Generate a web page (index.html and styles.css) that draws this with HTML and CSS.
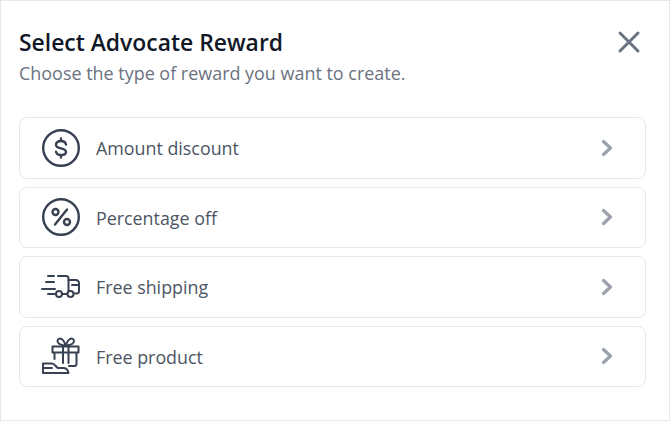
FILE: index.html
```html
<!DOCTYPE html>
<html lang="en">
<head>
<meta charset="utf-8">
<title>Select Advocate Reward</title>
<link rel="stylesheet" href="styles.css">
</head>
<body>
<div class="dialog">
  <header class="head">
    <div>
      <h1 class="title">Select Advocate Reward</h1>
      <p class="sub">Choose the type of reward you want to create.</p>
    </div>
    <svg class="close" viewBox="0 0 24 24" fill="none" stroke="currentColor" stroke-width="3" stroke-linecap="round"><path d="M3 3l18 18M21 3L3 21"/></svg>
  </header>
  <div class="list">
    <div class="row">
      <svg class="icon" viewBox="0 0 40 40" fill="none" stroke="currentColor" stroke-width="2.400" stroke-linecap="round" stroke-linejoin="round"><circle cx="20" cy="20" r="17.800"/><path d="M20 10.500v2.500M20 27v2.500M25 16.500c-.5-2.200-2.500-3.500-5-3.500-3 0-5 1.500-5 3.700 0 5 10 2.300 10 7.300 0 2-2 3-5 3-2.500 0-4.500-1.200-5-3.300"/></svg>
      <span class="label">Amount discount</span>
      <svg class="chev" viewBox="0 0 12 18" fill="none" stroke="currentColor" stroke-width="3.300" stroke-linecap="round" stroke-linejoin="round"><path d="M2.500 2.500L9.500 9l-7 6.500"/></svg>
    </div>
    <div class="row">
      <svg class="icon" viewBox="0 0 40 40" fill="none" stroke="currentColor" stroke-width="2.400" stroke-linecap="round" stroke-linejoin="round"><circle cx="20" cy="20" r="17.800"/><circle cx="14.500" cy="15" r="3"/><circle cx="26" cy="25" r="3"/><path d="M26 12.500L14 27.500"/></svg>
      <span class="label">Percentage off</span>
      <svg class="chev" viewBox="0 0 12 18" fill="none" stroke="currentColor" stroke-width="3.300" stroke-linecap="round" stroke-linejoin="round"><path d="M2.500 2.500L9.500 9l-7 6.500"/></svg>
    </div>
    <div class="row">
      <svg class="icon" viewBox="0 0 40 40" fill="none" stroke="currentColor" stroke-width="2" stroke-linecap="round" stroke-linejoin="round"><path d="M7 9h6M17 9h8c1.500 0 2.500 1 2.500 2.500V24M5 15h8M1 22h13M7 27h8M21 27h5"/><path d="M27.500 13h7c2 0 3.500 1.500 3.500 3.500V24c0 1.500-1 2.500-2.500 2.500H33M31 18h7"/><circle cx="18" cy="27" r="3"/><circle cx="29.500" cy="27" r="3"/></svg>
      <span class="label">Free shipping</span>
      <svg class="chev" viewBox="0 0 12 18" fill="none" stroke="currentColor" stroke-width="3.300" stroke-linecap="round" stroke-linejoin="round"><path d="M2.500 2.500L9.500 9l-7 6.500"/></svg>
    </div>
    <div class="row">
      <svg class="icon" viewBox="0 0 40 40" fill="none" stroke="currentColor" stroke-width="2" stroke-linecap="round" stroke-linejoin="round"><path d="M11.500 10.500h26v6h-26zM13.500 16.500V23M35.500 16.500V28c0 1-1 2-2 2H28M22 10.500V27M27.500 10.500V27"/><path d="M24.500 10c-2-.5-8-1.500-8-5 0-2 2-3 4-2 2.500 1.500 3.500 4 4 7zM25 10c2-.5 8-1.500 8-5 0-2-2-3-4-2-2.500 1.500-3.500 4-4 7z"/><path d="M2 37V27.500h9c2.500 0 4 3.500 6 4.500h5c3 0 5 2 5.500 5zM2 32h9"/></svg>
      <span class="label">Free product</span>
      <svg class="chev" viewBox="0 0 12 18" fill="none" stroke="currentColor" stroke-width="3.300" stroke-linecap="round" stroke-linejoin="round"><path d="M2.500 2.500L9.500 9l-7 6.500"/></svg>
    </div>
  </div>
</div>
</body>
</html>
```
FILE: styles.css
```css
* { box-sizing: border-box; }
html, body { margin: 0; padding: 0; background: #fff; }
body { font-family: "Open Sans", sans-serif; }
.dialog {
  width: 670px;
  height: 421px;
  border: 1px solid #e5e7eb;
  padding: 24px 23px 0 18px;
  display: flex;
  flex-direction: column;
}
.head { display: flex; justify-content: space-between; align-items: flex-start; }
.title { margin: 0; font-size: 22.9px; line-height: 36px; font-weight: 600; color: #111827; }
.sub { margin: 0; font-size: 17.95px; line-height: 24px; color: #6b7280; }
.close { width: 24px; height: 24px; color: #6b7280; margin-top: 5px; margin-right: 5px; flex: none; }
.list { margin-top: 32px; display: flex; flex-direction: column; gap: 8px; }
.row {
  height: 61.5px;
  border: 1px solid #e5e7eb;
  border-radius: 8px;
  padding: 0 32px 0 21px;
  display: flex;
  align-items: center;
}
.icon { width: 40px; height: 40px; flex: none; color: #374151; }
.label { flex: 1; margin-left: 15px; font-size: 17.85px; line-height: 24px; color: #4b5563; padding-top: 1px; }
.chev { width: 12px; height: 18px; color: #9ca3af; flex: none; }
```
